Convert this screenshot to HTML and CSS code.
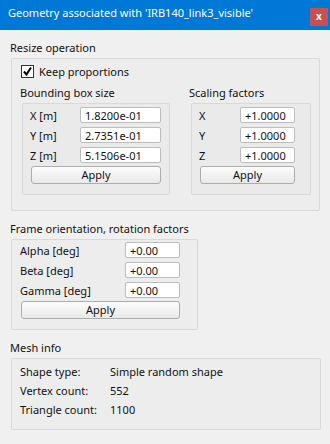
FILE: index.html
```html
<!DOCTYPE html>
<html lang="en">
<head>
  <meta charset="UTF-8" />
  <meta name="viewport" content="width=device-width, initial-scale=1.0" />
  <title>Geometry</title>
  <link rel="stylesheet" href="styles.css">
</head>
<body>
  <div class="titlebar">
    <span class="title">Geometry associated with 'IRB140_link3_visible'</span>
    <span class="close">x</span>
  </div>

  <div class="dialog">
    <div class="section-title">Resize operation</div>
    <div class="group resize">
      <label class="check">
        <span class="checkbox">
          <svg width="11" height="11" viewBox="0 0 11 11"><path d="M2 5.5 L4.5 8.5 L9 1.5" fill="none" stroke="#000" stroke-width="2"/></svg>
        </span>
        Keep proportions
      </label>
      <div class="columns">
        <div class="col col-bbox">
          <div class="sub-title">Bounding box size</div>
          <div class="group inner bbox">
            <div class="field"><span>X [m]</span><input type="text" value="1.8200e-01" /></div>
            <div class="field"><span>Y [m]</span><input type="text" value="2.7351e-01" /></div>
            <div class="field"><span>Z [m]</span><input type="text" value="5.1506e-01" /></div>
            <button>Apply</button>
          </div>
        </div>
        <div class="col col-scale">
          <div class="sub-title">Scaling factors</div>
          <div class="group inner scale">
            <div class="field"><span>X</span><input type="text" value="+1.0000" /></div>
            <div class="field"><span>Y</span><input type="text" value="+1.0000" /></div>
            <div class="field"><span>Z</span><input type="text" value="+1.0000" /></div>
            <button>Apply</button>
          </div>
        </div>
      </div>
    </div>

    <div class="section-title">Frame orientation, rotation factors</div>
    <div class="group frame">
      <div class="field"><span>Alpha [deg]</span><input type="text" value="+0.00" /></div>
      <div class="field"><span>Beta [deg]</span><input type="text" value="+0.00" /></div>
      <div class="field"><span>Gamma [deg]</span><input type="text" value="+0.00" /></div>
      <button>Apply</button>
    </div>

    <div class="section-title">Mesh info</div>
    <div class="group mesh">
      <div class="info"><span>Shape type:</span><span>Simple random shape</span></div>
      <div class="info"><span>Vertex count:</span><span>552</span></div>
      <div class="info"><span>Triangle count:</span><span>1100</span></div>
    </div>
  </div>
</body>
</html>
```

FILE: styles.css
```css
body {
  margin: 0;
  width: 330px;
  height: 444px;
  overflow: hidden;
  background: #f0f0f0;
  font-family: "Noto Sans", "Open Sans", sans-serif;
  font-size: 11px;
  color: #111;
}
.titlebar {
  height: 30px;
  background: #0078d7;
  color: white;
  display: flex;
  align-items: flex-start;
  justify-content: space-between;
  padding-left: 8px;
  padding-right: 2px;
}
.title {
  font-size: 11px;
  line-height: 30px;
  margin-top: -2px;
}
.close {
  width: 18px;
  height: 18px;
  margin-top: 8px;
  background: #c75050;
  color: white;
  font-size: 10px;
  font-weight: bold;
  line-height: 17px;
  text-align: center;
}
.dialog {
  padding: 10px 0 0 11px;
}
.section-title {
  height: 16px;
  line-height: 16px;
  margin-left: -1px;
  margin-bottom: 2px;
}
.group {
  border: 1px solid #d9d9d9;
  border-radius: 2px;
  background: rgba(0, 0, 0, 0.012);
  box-sizing: border-box;
}
.resize {
  width: 309px;
  padding: 5px 0 15px 9px;
  margin-bottom: 10px;
}
.check {
  display: flex;
  align-items: center;
  gap: 5px;
  height: 14px;
}
.checkbox {
  width: 13px;
  height: 13px;
  box-sizing: border-box;
  border: 1px solid #333;
  background: white;
  display: flex;
  align-items: center;
  justify-content: center;
}
.columns {
  display: flex;
  gap: 20px;
  margin-top: 7px;
}
.col-bbox {
  width: 149px;
}
.sub-title {
  height: 16px;
  line-height: 16px;
  margin-left: -1px;
  margin-bottom: 2px;
}
.inner {
  margin-left: 1px;
  display: flex;
  flex-direction: column;
  gap: 4px;
}
.bbox {
  width: 148px;
  padding: 3px 8px 10px 7px;
}
.scale {
  width: 120px;
  padding: 3px 15px 10px 7px;
}
.field {
  display: flex;
  align-items: center;
  height: 16px;
}
.field span {
  flex-shrink: 0;
}
.bbox .field span { width: 50px; }
.scale .field span { width: 41px; }
.frame .field span { width: 105px; }
input {
  box-sizing: border-box;
  height: 16px;
  border: 1px solid #bcbcbc;
  border-radius: 2px;
  background: white;
  font-family: inherit;
  font-size: 11px;
  color: #111;
  padding: 0 0 0 4px;
  margin: 0;
}
.bbox input { width: 81px; }
.scale input,
.frame input { width: 55px; }
button {
  box-sizing: border-box;
  height: 18px;
  margin: -1px 0 0 1px;
  border: 1px solid #adadad;
  border-radius: 3px;
  background: linear-gradient(#fcfcfc, #e9e9e9);
  font-family: inherit;
  font-size: 11px;
  color: #111;
  padding: 0;
  line-height: 16px;
}
.frame {
  width: 187px;
  padding: 2px 17px 10px 8px;
  margin-bottom: 10px;
  display: flex;
  flex-direction: column;
  gap: 4px;
}
.mesh {
  width: 310px;
  padding: 3px 0 10px 8px;
}
.info {
  display: flex;
  height: 19px;
  line-height: 19px;
}
.info span:first-child {
  width: 90px;
}
```
